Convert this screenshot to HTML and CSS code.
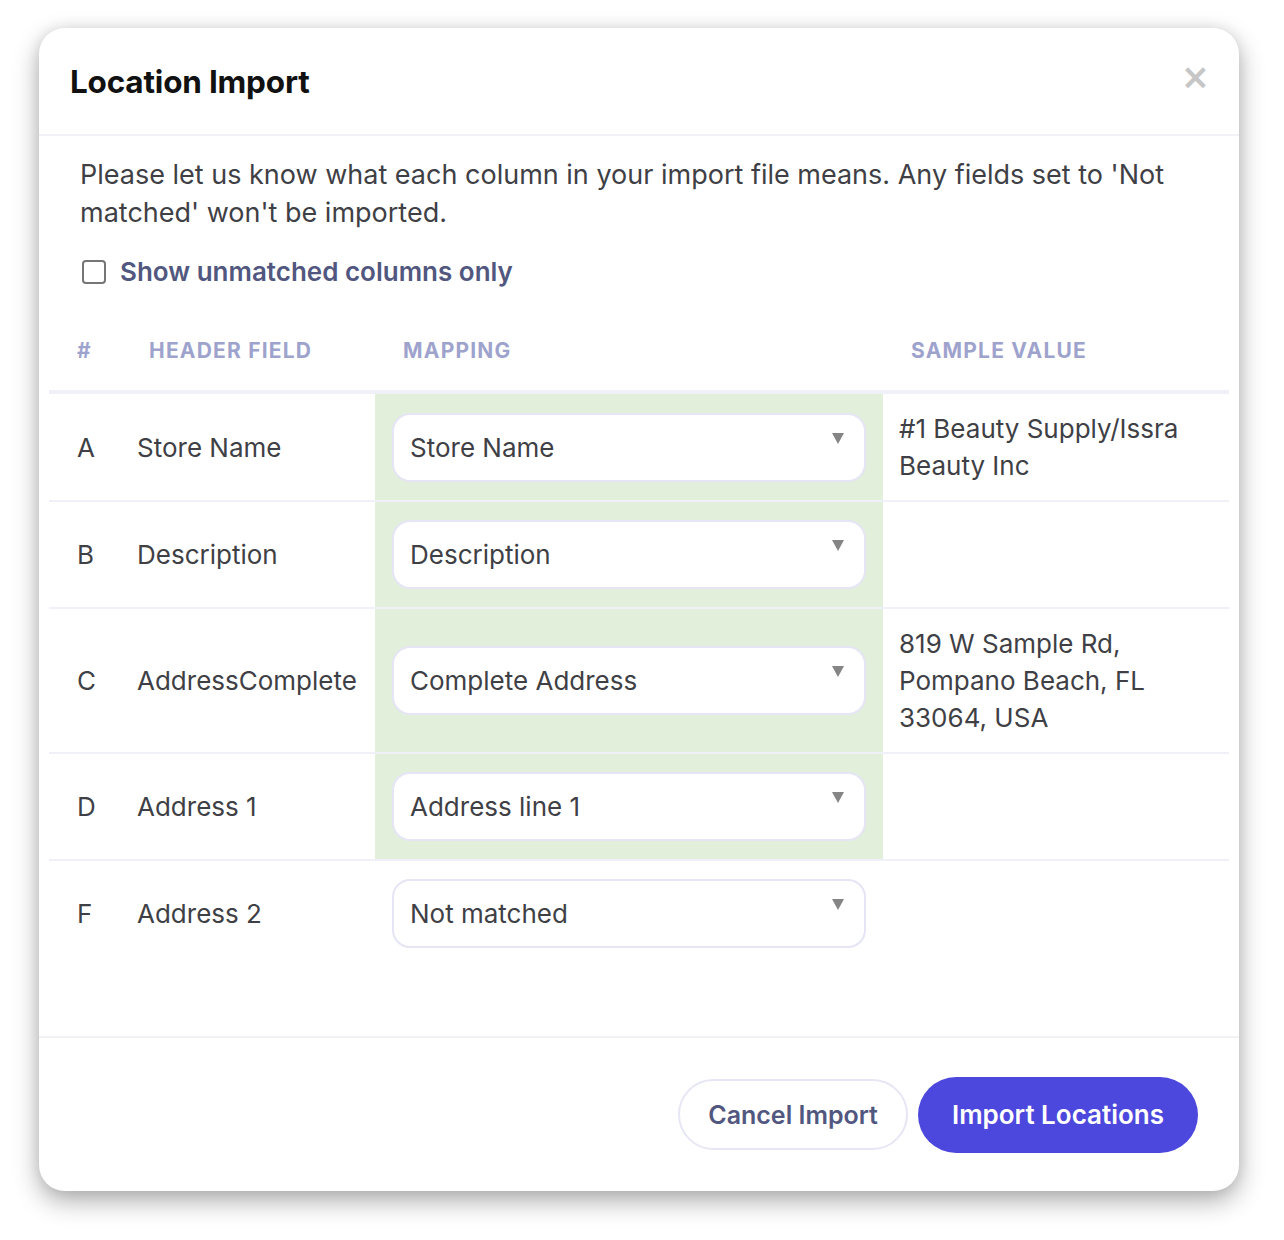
FILE: index.html
```html
<!DOCTYPE html>
<html lang="en">
<head>
    <meta charset="UTF-8">
    <meta name="viewport" content="width=device-width, initial-scale=1.0">
    <title>Location Import</title>
    <link rel="stylesheet" href="styles.css">
</head>
<body>
    <div class="modal">
        <div class="modal-header">
            <h1>Location Import</h1>
            <span class="close">&times;</span>
        </div>

        <div class="modal-body">
            <p class="intro">Please let us know what each column in your import file means. Any fields set to 'Not matched' won't be imported.</p>

            <label class="filter">
                <span class="checkbox"></span>
                Show unmatched columns only
            </label>

            <table class="mapping-table">
                <thead>
                    <tr>
                        <th class="col-letter">#</th>
                        <th class="col-field">Header Field</th>
                        <th class="col-map">Mapping</th>
                        <th class="col-sample">Sample Value</th>
                    </tr>
                </thead>
                <tbody>
                    <tr>
                        <td class="letter">A</td>
                        <td>Store Name</td>
                        <td class="map matched">
                            <div class="select">Store Name<span class="arrow"></span></div>
                        </td>
                        <td class="sample">#1 Beauty Supply/Issra Beauty Inc</td>
                    </tr>
                    <tr>
                        <td class="letter">B</td>
                        <td>Description</td>
                        <td class="map matched">
                            <div class="select">Description<span class="arrow"></span></div>
                        </td>
                        <td class="sample"></td>
                    </tr>
                    <tr>
                        <td class="letter">C</td>
                        <td>AddressComplete</td>
                        <td class="map matched">
                            <div class="select">Complete Address<span class="arrow"></span></div>
                        </td>
                        <td class="sample">819 W Sample Rd, Pompano Beach, FL 33064, USA</td>
                    </tr>
                    <tr>
                        <td class="letter">D</td>
                        <td>Address 1</td>
                        <td class="map matched">
                            <div class="select">Address line 1<span class="arrow"></span></div>
                        </td>
                        <td class="sample"></td>
                    </tr>
                    <tr class="last">
                        <td class="letter">F</td>
                        <td>Address 2</td>
                        <td class="map">
                            <div class="select">Not matched<span class="arrow"></span></div>
                        </td>
                        <td class="sample"></td>
                    </tr>
                </tbody>
            </table>
        </div>

        <div class="modal-footer">
            <button class="btn btn-cancel">Cancel Import</button>
            <button class="btn btn-primary">Import Locations</button>
        </div>
    </div>
</body>
</html>
```

FILE: styles.css
```css
body {
    margin: 0;
    padding: 28px 45px 49px 39px;
    background: #fff;
    font-family: Inter, "Noto Sans", Arial, sans-serif;
    color: #3f3f46;
}
.modal {
    width: 1200px;
    background: #fff;
    border-radius: 26px;
    box-shadow: 0 10px 26px rgba(0, 0, 0, 0.32), 0 0 14px rgba(0, 0, 0, 0.08);
    overflow: hidden;
}
.modal-header {
    display: flex;
    align-items: center;
    justify-content: space-between;
    height: 106px;
    padding: 0 29px 0 31px;
    border-bottom: 2px solid #f1f1f6;
}
.modal-header h1 {
    margin: 0;
    font-size: 31.5px;
    font-weight: 700;
    color: #111;
    letter-spacing: -0.2px;
}
.close {
    font-family: "DejaVu Sans", sans-serif;
    font-size: 35px;
    font-weight: bold;
    line-height: 1;
    color: #c6c6c6;
    margin-top: -8px;
}
.modal-body {
    padding: 20px 10px 70px;
}
.intro {
    margin: 0 0 21px;
    padding: 0 31px;
    font-size: 27px;
    line-height: 38px;
}
.filter {
    display: flex;
    align-items: center;
    gap: 14px;
    padding: 0 33px;
    font-size: 26px;
    line-height: 38px;
    font-weight: 600;
    color: #51577f;
}
.checkbox {
    width: 20px;
    height: 20px;
    border: 2px solid #767676;
    border-radius: 4px;
}
.mapping-table {
    width: 100%;
    margin-top: 19px;
    border-collapse: collapse;
    table-layout: fixed;
}
.mapping-table th,
.mapping-table td {
    box-sizing: border-box;
}
.mapping-table th {
    height: 82px;
    padding: 0 0 0 28px;
    text-align: left;
    font-size: 21px;
    font-weight: 700;
    letter-spacing: 1.2px;
    text-transform: uppercase;
    color: #9ea3cd;
    border-bottom: 4px solid #f0f1f8;
}
.col-letter { width: 72px; }
.col-field { width: 254px; }
.col-map { width: 508px; }
.mapping-table td {
    padding: 16px 16px;
    font-size: 26px;
    line-height: 37px;
    vertical-align: middle;
    border-bottom: 2px solid #f0f0f8;
}
.mapping-table tr.last td {
    border-bottom: none;
}
.mapping-table td.letter {
    padding-left: 28px;
}
.mapping-table td.map {
    padding: 18px 17px;
}
.matched {
    background: #e1efdb;
}
.select {
    position: relative;
    height: 65px;
    padding: 0 16px;
    display: flex;
    align-items: center;
    background: #fff;
    border: 2px solid #e5e5f5;
    border-radius: 18px;
}
.arrow {
    position: absolute;
    right: 20px;
    top: 18px;
    width: 0;
    height: 0;
    border-left: 6.5px solid transparent;
    border-right: 6.5px solid transparent;
    border-top: 11px solid #858585;
}
.modal-footer {
    display: flex;
    justify-content: flex-end;
    align-items: center;
    gap: 10px;
    height: 153px;
    padding: 0 41px;
    border-top: 2px solid #f1f1f6;
}
.btn {
    font-family: Inter, "Noto Sans", Arial, sans-serif;
    font-weight: 600;
    border-radius: 40px;
    cursor: pointer;
}
.btn-cancel {
    height: 71px;
    padding: 0 28px;
    font-size: 25px;
    background: #fff;
    color: #51577f;
    border: 2px solid #e6e6f5;
}
.btn-primary {
    height: 76px;
    padding: 0 34px;
    font-size: 26px;
    background: #4d48dd;
    color: #fff;
    border: none;
}
```
